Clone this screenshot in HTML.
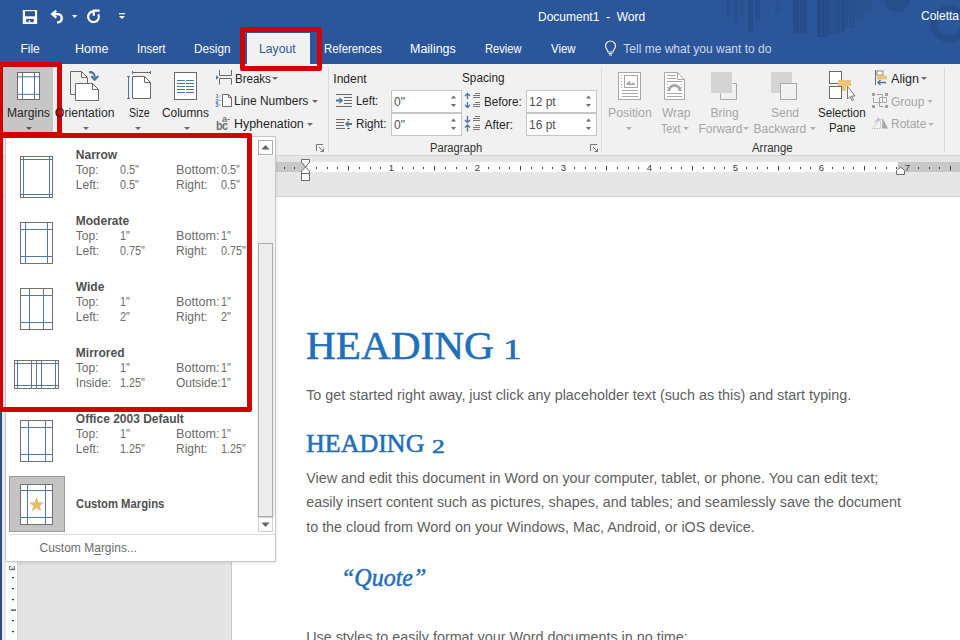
<!DOCTYPE html><html><head><meta charset="utf-8"><style>
html,body{margin:0;padding:0;width:960px;height:640px;overflow:hidden;background:#fff;}
.t{position:absolute;white-space:nowrap;}
.r{position:absolute;}
svg.r{overflow:visible;}
</style></head><body>
<div class="r" style="left:0px;top:0px;width:960px;height:64px;background:#2B579A"></div>
<div class="r" style="left:726.7px;top:0px;width:3.3px;height:16px;background:#284F8D;border-radius:0 0 3px 3px"></div>
<div class="r" style="left:734px;top:0px;width:4.3px;height:23px;background:#27508E;border-radius:0 0 3px 3px"></div>
<div class="r" style="left:740px;top:0px;width:4px;height:16px;background:#2A5290;border-radius:0 0 3px 3px"></div>
<div class="r" style="left:747.5px;top:0px;width:5px;height:32px;background:#264D8A;border-radius:0 0 3px 3px"></div>
<div class="r" style="left:755px;top:0px;width:5px;height:21px;background:#27508E;border-radius:0 0 3px 3px"></div>
<div class="r" style="left:775px;top:0px;width:6px;height:12px;background:#2A5391;border-radius:0 0 3px 3px"></div>
<div class="r" style="left:793.3px;top:0px;width:13.4px;height:32.5px;background:#264D8A;border-radius:0 0 3px 3px"></div>
<div class="r" style="left:816.7px;top:0px;width:11.6px;height:37px;background:#244B87;border-radius:0 0 3px 3px"></div>
<div class="r" style="left:828.3px;top:0px;width:8.4px;height:35px;background:#27508D;border-radius:0 0 3px 3px"></div>
<div class="r" style="left:836.7px;top:0px;width:8.3px;height:33px;background:#264E8B;border-radius:0 0 3px 3px"></div>
<div class="r" style="left:845px;top:0px;width:10px;height:28px;background:#28508D;border-radius:0 0 3px 3px"></div>
<div class="r" style="left:855px;top:0px;width:10px;height:20px;background:#29528F;border-radius:0 0 3px 3px"></div>
<div class="r" style="left:865px;top:0px;width:7px;height:12px;background:#2A5391;border-radius:0 0 3px 3px"></div>
<div class="r" style="left:799px;top:0px;width:1px;height:30px;background:#2A5492"></div>
<div class="r" style="left:802px;top:0px;width:1px;height:31px;background:#2A5492"></div>
<div class="r" style="left:821px;top:0px;width:1px;height:36px;background:#2A5492"></div>
<div class="r" style="left:825px;top:0px;width:1px;height:36px;background:#2A5492"></div>
<div class="r" style="left:832px;top:0px;width:1px;height:34px;background:#2A5492"></div>
<div class="r" style="left:840px;top:0px;width:1px;height:32px;background:#2A5492"></div>
<div class="r" style="left:848px;top:0px;width:1px;height:27px;background:#2A5492"></div>
<div class="r" style="left:852px;top:0px;width:1px;height:25px;background:#2A5492"></div>
<div class="r" style="left:859px;top:0px;width:1px;height:19px;background:#2A5492"></div>
<div class="r" style="left:868px;top:0px;width:1px;height:11px;background:#2A5492"></div>
<svg class="r" style="left:880px;top:0px;" width="80" height="64" viewBox="0 0 80 64"><circle cx="17" cy="-1" r="13" fill="#264E8B"/><circle cx="69" cy="24" r="15" fill="none" stroke="#264E8B" stroke-width="7"/></svg>
<svg class="r" style="left:22px;top:9px;" width="16" height="16" viewBox="0 0 16 16"><rect x="0.8" y="1" width="14.3" height="14" fill="#fff"/><rect x="3" y="2.2" width="10" height="5.1" fill="#2B579A"/><rect x="4.2" y="9.9" width="7.6" height="3.3" fill="#2B579A"/><rect x="6.6" y="11.4" width="1.6" height="1.8" fill="#fff"/></svg>
<svg class="r" style="left:46px;top:6px;" width="20" height="20" viewBox="0 0 20 20"><path d="M6 8.1H12.5A4.2 4.2 0 0 1 12.5 16.3H11" fill="none" stroke="#fff" stroke-width="2.3"/><path d="M10.3 4.7L6.2 8.1L10.3 11.6" fill="none" stroke="#fff" stroke-width="2.3"/></svg>
<svg class="r" style="left:72px;top:15px;" width="6" height="4" viewBox="0 0 6 4"><path d="M0 0h5.3l-2.65 3z" fill="#fff"/></svg>
<svg class="r" style="left:84px;top:6px;" width="20" height="20" viewBox="0 0 20 20"><path d="M9.5 5.3A5.4 5.4 0 1 0 14.3 8.2" fill="none" stroke="#fff" stroke-width="2.2"/><path d="M9.8 9.8V4.7H15.7" fill="none" stroke="#fff" stroke-width="2.2"/></svg>
<svg class="r" style="left:119px;top:13px;" width="7" height="8" viewBox="0 0 7 8"><rect x="0" y="0" width="6" height="1.3" fill="#fff"/><path d="M0 3h6l-3 3z" fill="#fff"/></svg>
<div class="t" style="left:538px;top:10.84px;font-size:12px;line-height:12px;color:#fff;font-weight:400;font-family:'Liberation Sans',sans-serif;font-style:normal;">Document1&nbsp;&nbsp;-&nbsp;&nbsp;Word</div>
<div class="t" style="left:921px;top:9.84px;font-size:12px;line-height:12px;color:#fff;font-weight:400;font-family:'Liberation Sans',sans-serif;font-style:normal;">Coletta</div>
<div class="t" style="left:20.4px;top:42.84px;font-size:12px;line-height:12px;color:#fff;font-weight:400;font-family:'Liberation Sans',sans-serif;font-style:normal;">File</div>
<div class="t" style="left:75px;top:42.84px;font-size:12px;line-height:12px;color:#fff;font-weight:400;font-family:'Liberation Sans',sans-serif;font-style:normal;transform:scaleX(1.045);transform-origin:0 0;">Home</div>
<div class="t" style="left:136.8px;top:42.84px;font-size:12px;line-height:12px;color:#fff;font-weight:400;font-family:'Liberation Sans',sans-serif;font-style:normal;transform:scaleX(0.95);transform-origin:0 0;">Insert</div>
<div class="t" style="left:194px;top:42.84px;font-size:12px;line-height:12px;color:#fff;font-weight:400;font-family:'Liberation Sans',sans-serif;font-style:normal;transform:scaleX(0.975);transform-origin:0 0;">Design</div>
<div class="r" style="left:247px;top:33px;width:63px;height:31px;background:#F1F1F1"></div>
<div class="t" style="left:259px;top:42.84px;font-size:12px;line-height:12px;color:#2F5A96;font-weight:400;font-family:'Liberation Sans',sans-serif;font-style:normal;transform:scaleX(1.02);transform-origin:0 0;">Layout</div>
<div class="t" style="left:324.2px;top:42.84px;font-size:12px;line-height:12px;color:#fff;font-weight:400;font-family:'Liberation Sans',sans-serif;font-style:normal;transform:scaleX(0.945);transform-origin:0 0;">References</div>
<div class="t" style="left:410.2px;top:42.84px;font-size:12px;line-height:12px;color:#fff;font-weight:400;font-family:'Liberation Sans',sans-serif;font-style:normal;transform:scaleX(1.04);transform-origin:0 0;">Mailings</div>
<div class="t" style="left:485.2px;top:42.84px;font-size:12px;line-height:12px;color:#fff;font-weight:400;font-family:'Liberation Sans',sans-serif;font-style:normal;transform:scaleX(0.925);transform-origin:0 0;">Review</div>
<div class="t" style="left:551px;top:42.84px;font-size:12px;line-height:12px;color:#fff;font-weight:400;font-family:'Liberation Sans',sans-serif;font-style:normal;transform:scaleX(0.95);transform-origin:0 0;">View</div>
<svg class="r" style="left:604px;top:40px;" width="13" height="16" viewBox="0 0 13 16"><path d="M6.5 1 A5 5 0 0 1 11.5 6 C11.5 8.5 9 10 9 12 H4 C4 10 1.5 8.5 1.5 6 A5 5 0 0 1 6.5 1z" fill="none" stroke="#E6ECF5" stroke-width="1.2"/><path d="M4.5 13.5h4M5 15h3" stroke="#E6ECF5" stroke-width="1"/></svg>
<div class="t" style="left:623.3px;top:42.84px;font-size:12px;line-height:12px;color:#CDD8EA;font-weight:400;font-family:'Liberation Sans',sans-serif;font-style:normal;">Tell me what you want to do</div>
<div class="r" style="left:0px;top:64px;width:960px;height:92px;background:#F1F1F1"></div>
<div class="r" style="left:0px;top:155px;width:960px;height:1px;background:#D5D5D5"></div>
<div class="r" style="left:328px;top:68px;width:1px;height:84px;background:#DADADA"></div>
<div class="r" style="left:601px;top:68px;width:1px;height:84px;background:#DADADA"></div>
<div class="r" style="left:944px;top:68px;width:1px;height:84px;background:#DADADA"></div>
<div class="r" style="left:3px;top:67px;width:50px;height:66px;background:#C6C6C6"></div>
<svg class="r" style="left:17px;top:72px;" width="23" height="29" viewBox="0 0 23 29"><rect x="0.5" y="0.5" width="22" height="27" fill="#fff" stroke="#6A6A6A"/><path d="M5.5 1V27M17.5 1V27M1 4.8H22M1 22.3H22" stroke="#4E74A0" stroke-width="1"/></svg>
<div class="t" style="left:6.5px;top:106.84px;font-size:12px;line-height:12px;color:#262626;font-weight:400;font-family:'Liberation Sans',sans-serif;font-style:normal;transform:scaleX(1.005);transform-origin:0 0;">Margins</div>
<svg class="r" style="left:26px;top:126.5px;" width="6" height="4" viewBox="0 0 6 4"><path d="M0 0h6l-3 3z" fill="#555"/></svg>
<svg class="r" style="left:64px;top:66px;" width="40" height="40" viewBox="0 0 40 40"><path d="M6.5 28.5V5.5H17.5L23.5 11.5V17" fill="none" stroke="#6A6A6A"/><path d="M17.5 5.5V11.5H23" fill="none" stroke="#6A6A6A"/><path d="M6.5 28.5H11" stroke="#6A6A6A"/><path d="M11.5 17.5H28.5L34.5 23.5V34.5H11.5Z" fill="#fff" stroke="#6A6A6A"/><path d="M28.5 17.5V23.5H34.5" fill="none" stroke="#6A6A6A"/><path d="M25 6.2 C28.5 5.8 31 7.5 30.8 12.5" fill="none" stroke="#4E74A0" stroke-width="2.1"/><path d="M27.3 10.3L30.7 13.8L34.3 10.1" fill="none" stroke="#4E74A0" stroke-width="2.1"/></svg>
<div class="r" style="left:74.5px;top:89px;width:0px;height:0px;"></div>
<div class="t" style="left:55.2px;top:106.84px;font-size:12px;line-height:12px;color:#262626;font-weight:400;font-family:'Liberation Sans',sans-serif;font-style:normal;transform:scaleX(1.012);transform-origin:0 0;">Orientation</div>
<svg class="r" style="left:82.5px;top:126.5px;" width="6" height="4" viewBox="0 0 6 4"><path d="M0 0h6l-3 3z" fill="#6A6A6A"/></svg>
<svg class="r" style="left:122px;top:66px;" width="40" height="40" viewBox="0 0 40 40"><path d="M6.5 10.5V32.5M5 10.5H8M5 32.5H8" stroke="#4E74A0"/><path d="M10.5 6.5H28.5M10.5 5V8M28.5 5V8" stroke="#6A6A6A"/><path d="M10.5 10.5H22.5L28.5 16.5V32.5H10.5Z" fill="#fff" stroke="#6A6A6A"/><path d="M22.5 10.5V16.5H28.5" fill="none" stroke="#6A6A6A"/></svg>
<div class="t" style="left:129px;top:106.84px;font-size:12px;line-height:12px;color:#262626;font-weight:400;font-family:'Liberation Sans',sans-serif;font-style:normal;transform:scaleX(0.88);transform-origin:0 0;">Size</div>
<svg class="r" style="left:135px;top:126.5px;" width="6" height="4" viewBox="0 0 6 4"><path d="M0 0h6l-3 3z" fill="#6A6A6A"/></svg>
<svg class="r" style="left:172px;top:70px;" width="28" height="32" viewBox="0 0 28 32"><rect x="2.5" y="2.5" width="22" height="27" fill="#fff" stroke="#6A6A6A"/><path d="M5 10.5H13M14 10.5H22" stroke="#4E74A0"/><path d="M5 13.5H13M14 13.5H22" stroke="#4E74A0"/><path d="M5 16.5H13M14 16.5H22" stroke="#4E74A0"/><path d="M5 19.5H13M14 19.5H22" stroke="#4E74A0"/><path d="M5 22.5H13M14 22.5H22" stroke="#4E74A0"/></svg>
<div class="t" style="left:162.4px;top:106.84px;font-size:12px;line-height:12px;color:#262626;font-weight:400;font-family:'Liberation Sans',sans-serif;font-style:normal;transform:scaleX(0.99);transform-origin:0 0;">Columns</div>
<svg class="r" style="left:183.5px;top:126.5px;" width="6" height="4" viewBox="0 0 6 4"><path d="M0 0h6l-3 3z" fill="#6A6A6A"/></svg>
<svg class="r" style="left:214px;top:68px;" width="20" height="20" viewBox="0 0 20 20"><path d="M5.5 2V7.5H17.5V2M5.5 16.5V10.5H17.5V16.5" fill="none" stroke="#6A6A6A"/><path d="M2 7.3L4.8 9.5L2 11.7Z" fill="#4E74A0"/></svg>
<div class="t" style="left:235px;top:72.64px;font-size:12px;line-height:12px;color:#262626;font-weight:400;font-family:'Liberation Sans',sans-serif;font-style:normal;transform:scaleX(0.96);transform-origin:0 0;">Breaks</div>
<svg class="r" style="left:271.7px;top:76.5px;" width="6" height="4" viewBox="0 0 6 4"><path d="M0 0h6l-3 3z" fill="#6A6A6A"/></svg>
<svg class="r" style="left:214px;top:92px;" width="20" height="18" viewBox="0 0 20 18"><path d="M8.5 2.5H14.5L17.5 5.5V14.5H8.5Z" fill="#fff" stroke="#6A6A6A"/><path d="M14.5 2.5V5.5H17.5" fill="none" stroke="#6A6A6A"/><text x="1.6" y="6.2" font-size="5.5" font-weight="700" fill="#4E74A0" font-family="Liberation Sans">1</text><text x="1.6" y="10.7" font-size="5.5" font-weight="700" fill="#4E74A0" font-family="Liberation Sans">2</text><text x="1.6" y="15.2" font-size="5.5" font-weight="700" fill="#4E74A0" font-family="Liberation Sans">3</text><path d="M6 3.5v1M6 8v1M6 12.5v1" stroke="#4E74A0"/></svg>
<div class="t" style="left:234.3px;top:95.44px;font-size:12px;line-height:12px;color:#262626;font-weight:400;font-family:'Liberation Sans',sans-serif;font-style:normal;transform:scaleX(0.995);transform-origin:0 0;">Line Numbers</div>
<svg class="r" style="left:311.7px;top:99.5px;" width="6" height="4" viewBox="0 0 6 4"><path d="M0 0h6l-3 3z" fill="#6A6A6A"/></svg>
<div class="t" style="left:215.5px;top:119.54px;font-size:12px;line-height:12px;color:#707070;font-weight:700;font-family:'Liberation Sans',sans-serif;font-style:normal;transform:scaleX(0.9);transform-origin:0 0;letter-spacing:-0.8px">bc</div>
<div class="t" style="left:222px;top:114.26px;font-size:9.5px;line-height:9.5px;color:#707070;font-weight:700;font-family:'Liberation Sans',sans-serif;font-style:normal;transform:scaleX(0.95);transform-origin:0 0;">a-</div>
<div class="t" style="left:234.3px;top:118.44px;font-size:12px;line-height:12px;color:#262626;font-weight:400;font-family:'Liberation Sans',sans-serif;font-style:normal;transform:scaleX(1.035);transform-origin:0 0;">Hyphenation</div>
<svg class="r" style="left:306.5px;top:122.5px;" width="6" height="4" viewBox="0 0 6 4"><path d="M0 0h6l-3 3z" fill="#6A6A6A"/></svg>
<svg class="r" style="left:316px;top:144px;" width="9" height="9" viewBox="0 0 9 9"><path d="M0.5 7V0.5H7" fill="none" stroke="#777"/><path d="M3 3L7.5 7.5M4.5 7.5H7.5V4.5" fill="none" stroke="#777"/></svg>
<div class="t" style="left:333.3px;top:72.64px;font-size:12px;line-height:12px;color:#262626;font-weight:400;font-family:'Liberation Sans',sans-serif;font-style:normal;">Indent</div>
<div class="t" style="left:461.8px;top:72.44px;font-size:12px;line-height:12px;color:#262626;font-weight:400;font-family:'Liberation Sans',sans-serif;font-style:normal;transform:scaleX(0.98);transform-origin:0 0;">Spacing</div>
<svg class="r" style="left:334px;top:92px;" width="20" height="16" viewBox="0 0 20 16"><path d="M2 2.5H18M10 5.5H18M10 8.5H18M10 11.5H18M2 14.5H18" stroke="#6A6A6A" stroke-width="1.1"/><path d="M2 7.5H5.5V5L9 8.5L5.5 12V9.5H2Z" fill="#4E74A0"/></svg>
<div class="t" style="left:355.8px;top:95.14px;font-size:12px;line-height:12px;color:#262626;font-weight:400;font-family:'Liberation Sans',sans-serif;font-style:normal;transform:scaleX(0.955);transform-origin:0 0;">Left:</div>
<svg class="r" style="left:334px;top:116px;" width="20" height="16" viewBox="0 0 20 16"><path d="M2 3.5H11M13 3.5H16M2 6.5H10M2 9.5H10M2 12.5H11M13 12.5H16" stroke="#6A6A6A" stroke-width="1.1"/><path d="M18 7H14.5V4.5L11 8L14.5 11.5V9H18Z" fill="#4E74A0"/></svg>
<div class="t" style="left:355.8px;top:118.34px;font-size:12px;line-height:12px;color:#262626;font-weight:400;font-family:'Liberation Sans',sans-serif;font-style:normal;transform:scaleX(0.975);transform-origin:0 0;">Right:</div>
<div class="r" style="left:391px;top:90px;width:71px;height:23px;background:#fff;box-shadow:inset 0 0 0 1px #C6C6C6"></div>
<div class="t" style="left:394px;top:95.84px;font-size:12px;line-height:12px;color:#505050;font-weight:400;font-family:'Liberation Sans',sans-serif;font-style:normal;">0"</div>
<svg class="r" style="left:450px;top:94px;" width="8" height="14" viewBox="0 0 8 14"><path d="M1 4.5L3.5 1.5L6 4.5Z" fill="#6A6A6A"/><path d="M1 10L3.5 13L6 10Z" fill="#6A6A6A"/></svg>
<div class="r" style="left:391px;top:113px;width:71px;height:23px;background:#fff;box-shadow:inset 0 0 0 1px #C6C6C6"></div>
<div class="t" style="left:394px;top:118.84px;font-size:12px;line-height:12px;color:#505050;font-weight:400;font-family:'Liberation Sans',sans-serif;font-style:normal;">0"</div>
<svg class="r" style="left:450px;top:117px;" width="8" height="14" viewBox="0 0 8 14"><path d="M1 4.5L3.5 1.5L6 4.5Z" fill="#6A6A6A"/><path d="M1 10L3.5 13L6 10Z" fill="#6A6A6A"/></svg>
<svg class="r" style="left:462px;top:91px;" width="20" height="18" viewBox="0 0 20 18"><path d="M5.5 2.5V8M3 5L5.5 2.5L8 5M5.5 11V16.5M3 14L5.5 16.5L8 14" fill="none" stroke="#4E74A0" stroke-width="1.3"/><path d="M13 2.5H18M11 4.5H18M11 6.5H18M13 11.5H18M11 13.5H18M11 15.5H18" stroke="#777" stroke-width="1"/></svg>
<div class="t" style="left:484px;top:95.84px;font-size:12px;line-height:12px;color:#262626;font-weight:400;font-family:'Liberation Sans',sans-serif;font-style:normal;transform:scaleX(0.975);transform-origin:0 0;">Before:</div>
<svg class="r" style="left:462px;top:115px;" width="20" height="18" viewBox="0 0 20 18"><path d="M5.5 1V7.5M3 5L5.5 7.5L8 5M5.5 10V16.5M3 12.5L5.5 10L8 12.5" fill="none" stroke="#4E74A0" stroke-width="1.3"/><path d="M13 1.5H18M11 3.5H18M11 5.5H18M13 10.5H18M11 12.5H18M11 14.5H18" stroke="#777" stroke-width="1"/></svg>
<div class="t" style="left:484.4px;top:118.84px;font-size:12px;line-height:12px;color:#262626;font-weight:400;font-family:'Liberation Sans',sans-serif;font-style:normal;">After:</div>
<div class="r" style="left:526px;top:90px;width:71px;height:23px;background:#fff;box-shadow:inset 0 0 0 1px #C6C6C6"></div>
<div class="t" style="left:529px;top:95.84px;font-size:12px;line-height:12px;color:#505050;font-weight:400;font-family:'Liberation Sans',sans-serif;font-style:normal;">12 pt</div>
<svg class="r" style="left:585px;top:94px;" width="8" height="14" viewBox="0 0 8 14"><path d="M1 4.5L3.5 1.5L6 4.5Z" fill="#6A6A6A"/><path d="M1 10L3.5 13L6 10Z" fill="#6A6A6A"/></svg>
<div class="r" style="left:526px;top:113px;width:71px;height:23px;background:#fff;box-shadow:inset 0 0 0 1px #C6C6C6"></div>
<div class="t" style="left:529px;top:118.84px;font-size:12px;line-height:12px;color:#505050;font-weight:400;font-family:'Liberation Sans',sans-serif;font-style:normal;">16 pt</div>
<svg class="r" style="left:585px;top:117px;" width="8" height="14" viewBox="0 0 8 14"><path d="M1 4.5L3.5 1.5L6 4.5Z" fill="#6A6A6A"/><path d="M1 10L3.5 13L6 10Z" fill="#6A6A6A"/></svg>
<div class="t" style="left:430.2px;top:141.64px;font-size:12px;line-height:12px;color:#333;font-weight:400;font-family:'Liberation Sans',sans-serif;font-style:normal;transform:scaleX(0.93);transform-origin:0 0;">Paragraph</div>
<svg class="r" style="left:590px;top:144px;" width="9" height="9" viewBox="0 0 9 9"><path d="M0.5 7V0.5H7" fill="none" stroke="#777"/><path d="M3 3L7.5 7.5M4.5 7.5H7.5V4.5" fill="none" stroke="#777"/></svg>
<svg class="r" style="left:617px;top:71px;" width="26" height="30" viewBox="0 0 26 30"><rect x="1.5" y="1.5" width="22" height="27" fill="#fff" stroke="#A8A8A8"/><rect x="7.5" y="4.5" width="13" height="12" fill="#fff" stroke="#A8A8A8"/><path d="M9 14L12 9.5L14.5 13L16 11L18.5 14Z" fill="#A8A8A8"/><path d="M5 19.5H21M5 22.5H21M5 25.5H21M4 4.5h1M4 7.5h1M4 10.5h1M4 13.5h1M4 16.5h1" stroke="#A8A8A8"/></svg>
<div class="t" style="left:608px;top:106.84px;font-size:12px;line-height:12px;color:#A6A6A6;font-weight:400;font-family:'Liberation Sans',sans-serif;font-style:normal;transform:scaleX(1.025);transform-origin:0 0;">Position</div>
<svg class="r" style="left:626px;top:127.19999999999999px;" width="6" height="4" viewBox="0 0 6 4"><path d="M0 0h6l-3 3z" fill="#B0B0B0"/></svg>
<svg class="r" style="left:663px;top:71px;" width="24" height="30" viewBox="0 0 24 30"><path d="M1.5 1.5H14.5L21.5 8.5V28.5H1.5Z" fill="#fff" stroke="#A8A8A8"/><path d="M14.5 1.5V8.5H21.5" fill="none" stroke="#A8A8A8"/><path d="M4 4.5H13M4 7.5H13M4 10.5H19M4 22.5H19M4 25.5H19M4 13.5h1M4 16.5h1M4 19.5h1M18 13.5h1M18 16.5h1M18 19.5h1" stroke="#A8A8A8"/><path d="M6 20A5.5 5.5 0 0 1 17 20" fill="none" stroke="#A8A8A8" stroke-width="3"/></svg>
<div class="t" style="left:661.9px;top:106.84px;font-size:12px;line-height:12px;color:#A6A6A6;font-weight:400;font-family:'Liberation Sans',sans-serif;font-style:normal;">Wrap</div>
<div class="t" style="left:661px;top:122.84px;font-size:12px;line-height:12px;color:#A6A6A6;font-weight:400;font-family:'Liberation Sans',sans-serif;font-style:normal;transform:scaleX(0.89);transform-origin:0 0;">Text</div>
<svg class="r" style="left:683.3px;top:127.19999999999999px;" width="6" height="4" viewBox="0 0 6 4"><path d="M0 0h6l-3 3z" fill="#B0B0B0"/></svg>
<svg class="r" style="left:710px;top:71px;" width="28" height="30" viewBox="0 0 28 30"><rect x="1" y="1" width="21" height="21" fill="#D4D4D4"/><path d="M22.5 12.5H26.5V28.5H10.5V22.5" fill="none" stroke="#A8A8A8"/></svg>
<div class="t" style="left:710.6px;top:106.84px;font-size:12px;line-height:12px;color:#A6A6A6;font-weight:400;font-family:'Liberation Sans',sans-serif;font-style:normal;">Bring</div>
<div class="t" style="left:698.4px;top:122.84px;font-size:12px;line-height:12px;color:#A6A6A6;font-weight:400;font-family:'Liberation Sans',sans-serif;font-style:normal;">Forward</div>
<svg class="r" style="left:743px;top:127.19999999999999px;" width="6" height="4" viewBox="0 0 6 4"><path d="M0 0h6l-3 3z" fill="#B0B0B0"/></svg>
<svg class="r" style="left:770px;top:71px;" width="28" height="30" viewBox="0 0 28 30"><rect x="1" y="1" width="21" height="21" fill="#D4D4D4"/><rect x="10.5" y="12.5" width="16" height="16" fill="#F1F1F1" stroke="#A8A8A8"/></svg>
<div class="t" style="left:771px;top:106.84px;font-size:12px;line-height:12px;color:#A6A6A6;font-weight:400;font-family:'Liberation Sans',sans-serif;font-style:normal;">Send</div>
<div class="t" style="left:753.5px;top:122.84px;font-size:12px;line-height:12px;color:#A6A6A6;font-weight:400;font-family:'Liberation Sans',sans-serif;font-style:normal;">Backward</div>
<svg class="r" style="left:809.5px;top:127.19999999999999px;" width="6" height="4" viewBox="0 0 6 4"><path d="M0 0h6l-3 3z" fill="#B0B0B0"/></svg>
<div class="t" style="left:751.8px;top:141.64px;font-size:12px;line-height:12px;color:#333;font-weight:400;font-family:'Liberation Sans',sans-serif;font-style:normal;transform:scaleX(0.95);transform-origin:0 0;">Arrange</div>
<svg class="r" style="left:826px;top:69px;" width="32" height="34" viewBox="0 0 32 34"><rect x="3.5" y="2.5" width="12" height="12" fill="#fff" stroke="#6A6A6A"/><rect x="3.5" y="17.5" width="12" height="12" fill="#fff" stroke="#6A6A6A"/><path d="M12 11H25V17H20V22H16V17H12Z" fill="#EEC37A"/><path d="M21.5 17.5V30L24 27.5L26 31.5L27.5 30.8L25.5 27H29Z" fill="#fff" stroke="#6A6A6A" stroke-width="0.9"/></svg>
<div class="t" style="left:818px;top:106.84px;font-size:12px;line-height:12px;color:#262626;font-weight:400;font-family:'Liberation Sans',sans-serif;font-style:normal;transform:scaleX(0.967);transform-origin:0 0;">Selection</div>
<div class="t" style="left:829.4px;top:122.14px;font-size:12px;line-height:12px;color:#262626;font-weight:400;font-family:'Liberation Sans',sans-serif;font-style:normal;transform:scaleX(0.95);transform-origin:0 0;">Pane</div>
<svg class="r" style="left:872px;top:69px;" width="18" height="18" viewBox="0 0 18 18"><path d="M3.5 1V16" stroke="#6A6A6A"/><rect x="5" y="2" width="6" height="4" fill="#fff" stroke="#6A6A6A" stroke-width="0.8"/><rect x="5" y="6.5" width="10" height="4" fill="#EEC37A"/><path d="M14 13.5H6M8.5 11L6 13.5L8.5 16" fill="none" stroke="#4E74A0" stroke-width="1.3"/></svg>
<div class="t" style="left:891px;top:72.64px;font-size:12px;line-height:12px;color:#262626;font-weight:400;font-family:'Liberation Sans',sans-serif;font-style:normal;transform:scaleX(1.054);transform-origin:0 0;">Align</div>
<svg class="r" style="left:921.4px;top:76.5px;" width="6" height="4" viewBox="0 0 6 4"><path d="M0 0h6l-3 3z" fill="#6A6A6A"/></svg>
<svg class="r" style="left:868px;top:90px;" width="24" height="20" viewBox="0 0 24 20"><rect x="4" y="3" width="3" height="3" fill="#A0A0A0"/><rect x="17" y="3" width="3" height="3" fill="#A0A0A0"/><rect x="4" y="15" width="3" height="3" fill="#A0A0A0"/><rect x="17" y="15" width="3" height="3" fill="#A0A0A0"/><path d="M8.5 4.5H14.5V12.5M5.5 7.5V12.5H18.5V7.5H11.5V16.5H15.5" fill="none" stroke="#A8A8A8"/></svg>
<div class="t" style="left:891px;top:95.84px;font-size:12px;line-height:12px;color:#A6A6A6;font-weight:400;font-family:'Liberation Sans',sans-serif;font-style:normal;">Group</div>
<svg class="r" style="left:927px;top:99.5px;" width="6" height="4" viewBox="0 0 6 4"><path d="M0 0h6l-3 3z" fill="#B8B8B8"/></svg>
<svg class="r" style="left:868px;top:114px;" width="24" height="18" viewBox="0 0 24 18"><path d="M14.2 3.5L20 14.5H14.2Z" fill="#A8A8A8"/><path d="M12.5 14.5H4.5L12.5 5V14" fill="none" stroke="#B8B8B8" stroke-dasharray="1.5 1"/><path d="M7 8.5C7.5 6.5 8.5 5.5 10.5 5.5" fill="none" stroke="#A8A8A8"/><path d="M9.5 3.5L11.5 5.5L9.5 7.5" fill="none" stroke="#A8A8A8"/></svg>
<div class="t" style="left:891px;top:118.14px;font-size:12px;line-height:12px;color:#A6A6A6;font-weight:400;font-family:'Liberation Sans',sans-serif;font-style:normal;">Rotate</div>
<svg class="r" style="left:928.3px;top:122.5px;" width="6" height="4" viewBox="0 0 6 4"><path d="M0 0h6l-3 3z" fill="#B8B8B8"/></svg>
<div class="r" style="left:0px;top:156px;width:960px;height:40px;background:#E6E6E6"></div>
<div class="r" style="left:0px;top:196px;width:960px;height:1px;background:#D4D4D4"></div>
<div class="r" style="left:232px;top:162px;width:74px;height:10px;background:#C8C8C8"></div>
<div class="r" style="left:306px;top:162px;width:592px;height:10px;background:#FFFFFF"></div>
<div class="r" style="left:898px;top:162px;width:62px;height:10px;background:#C8C8C8"></div>
<svg class="r" style="left:0px;top:0px;pointer-events:none" width="960" height="640" viewBox="0 0 960 640"><rect x="241" y="167" width="1" height="2" fill="#444"/><rect x="251" y="167" width="1" height="2" fill="#444"/><rect x="262" y="166" width="1" height="4.5" fill="#444"/><rect x="273" y="167" width="1" height="2" fill="#444"/><rect x="284" y="167" width="1" height="2" fill="#444"/><rect x="294" y="167" width="1" height="2" fill="#444"/><rect x="316" y="167" width="1" height="2" fill="#444"/><rect x="327" y="167" width="1" height="2" fill="#444"/><rect x="337" y="167" width="1" height="2" fill="#444"/><rect x="348" y="166" width="1" height="4.5" fill="#444"/><rect x="359" y="167" width="1" height="2" fill="#444"/><rect x="370" y="167" width="1" height="2" fill="#444"/><rect x="380" y="167" width="1" height="2" fill="#444"/><text x="391.5" y="171" font-size="9.5" text-anchor="middle" fill="#3A3A3A" font-family="Liberation Sans">1</text><rect x="402" y="167" width="1" height="2" fill="#444"/><rect x="413" y="167" width="1" height="2" fill="#444"/><rect x="423" y="167" width="1" height="2" fill="#444"/><rect x="434" y="166" width="1" height="4.5" fill="#444"/><rect x="445" y="167" width="1" height="2" fill="#444"/><rect x="456" y="167" width="1" height="2" fill="#444"/><rect x="466" y="167" width="1" height="2" fill="#444"/><text x="477.5" y="171" font-size="9.5" text-anchor="middle" fill="#3A3A3A" font-family="Liberation Sans">2</text><rect x="488" y="167" width="1" height="2" fill="#444"/><rect x="499" y="167" width="1" height="2" fill="#444"/><rect x="509" y="167" width="1" height="2" fill="#444"/><rect x="520" y="166" width="1" height="4.5" fill="#444"/><rect x="531" y="167" width="1" height="2" fill="#444"/><rect x="542" y="167" width="1" height="2" fill="#444"/><rect x="552" y="167" width="1" height="2" fill="#444"/><text x="563.5" y="171" font-size="9.5" text-anchor="middle" fill="#3A3A3A" font-family="Liberation Sans">3</text><rect x="574" y="167" width="1" height="2" fill="#444"/><rect x="585" y="167" width="1" height="2" fill="#444"/><rect x="595" y="167" width="1" height="2" fill="#444"/><rect x="606" y="166" width="1" height="4.5" fill="#444"/><rect x="617" y="167" width="1" height="2" fill="#444"/><rect x="628" y="167" width="1" height="2" fill="#444"/><rect x="638" y="167" width="1" height="2" fill="#444"/><text x="649.5" y="171" font-size="9.5" text-anchor="middle" fill="#3A3A3A" font-family="Liberation Sans">4</text><rect x="660" y="167" width="1" height="2" fill="#444"/><rect x="671" y="167" width="1" height="2" fill="#444"/><rect x="681" y="167" width="1" height="2" fill="#444"/><rect x="692" y="166" width="1" height="4.5" fill="#444"/><rect x="703" y="167" width="1" height="2" fill="#444"/><rect x="714" y="167" width="1" height="2" fill="#444"/><rect x="724" y="167" width="1" height="2" fill="#444"/><text x="735.5" y="171" font-size="9.5" text-anchor="middle" fill="#3A3A3A" font-family="Liberation Sans">5</text><rect x="746" y="167" width="1" height="2" fill="#444"/><rect x="757" y="167" width="1" height="2" fill="#444"/><rect x="767" y="167" width="1" height="2" fill="#444"/><rect x="778" y="166" width="1" height="4.5" fill="#444"/><rect x="789" y="167" width="1" height="2" fill="#444"/><rect x="800" y="167" width="1" height="2" fill="#444"/><rect x="810" y="167" width="1" height="2" fill="#444"/><text x="821.5" y="171" font-size="9.5" text-anchor="middle" fill="#3A3A3A" font-family="Liberation Sans">6</text><rect x="832" y="167" width="1" height="2" fill="#444"/><rect x="843" y="167" width="1" height="2" fill="#444"/><rect x="853" y="167" width="1" height="2" fill="#444"/><rect x="864" y="166" width="1" height="4.5" fill="#444"/><rect x="875" y="167" width="1" height="2" fill="#444"/><rect x="886" y="167" width="1" height="2" fill="#444"/><rect x="896" y="167" width="1" height="2" fill="#444"/><text x="907.5" y="171" font-size="9.5" text-anchor="middle" fill="#3A3A3A" font-family="Liberation Sans">7</text><rect x="918" y="167" width="1" height="2" fill="#444"/><rect x="929" y="167" width="1" height="2" fill="#444"/><rect x="939" y="167" width="1" height="2" fill="#444"/><rect x="950" y="166" width="1" height="4.5" fill="#444"/></svg>
<svg class="r" style="left:300px;top:158px;" width="12" height="24" viewBox="0 0 12 24"><path d="M1.5 1.5H9.5V4L5.5 9L9.5 13V15.5H1.5V13L5.5 9L1.5 4Z" fill="#fff" stroke="#6A6A6A"/><rect x="1.5" y="15.5" width="8" height="7" fill="#fff" stroke="#6A6A6A"/></svg>
<svg class="r" style="left:895px;top:166px;" width="12" height="10" viewBox="0 0 12 10"><path d="M1.5 8.5V4.5L5.5 1L9.5 4.5V8.5Z" fill="#fff" stroke="#6A6A6A"/></svg>
<div class="r" style="left:0px;top:197px;width:1.5px;height:443px;background:#2B4F86"></div>
<div class="r" style="left:1.5px;top:197px;width:4px;height:443px;background:#EDE8E8"></div>
<div class="r" style="left:5.5px;top:197px;width:12px;height:443px;background:#FFFFFF"></div>
<div class="r" style="left:17px;top:197px;width:215px;height:443px;background:#E4E4E4"></div>
<div class="r" style="left:17px;top:197px;width:1px;height:443px;background:#D8D8D8"></div>
<div class="r" style="left:20px;top:197px;width:1px;height:443px;background:#DDDDDD"></div>
<div class="r" style="left:226px;top:197px;width:1px;height:443px;background:#EAEAEA"></div>
<div class="r" style="left:231px;top:197px;width:1px;height:443px;background:#C9C9C9"></div>
<svg class="r" style="left:0px;top:560px;" width="20" height="80" viewBox="0 0 20 80"><text x="0" y="0" font-size="9.5" fill="#333" font-family="Liberation Sans" transform="translate(9.3,5.5) rotate(90)">3</text><rect x="12" y="17" width="2" height="1.2" fill="#333"/><rect x="12" y="28" width="2" height="1.2" fill="#333"/><rect x="12" y="39" width="2" height="1.2" fill="#333"/><rect x="11" y="49.5" width="5" height="1.2" fill="#333"/><rect x="12" y="60" width="2" height="1.2" fill="#333"/><rect x="12" y="71" width="2" height="1.2" fill="#333"/></svg>
<div class="t" style="left:305.8px;top:326.10px;font-size:40px;line-height:40px;color:#1F6FBA;font-weight:400;font-family:'Liberation Serif',serif;font-style:normal;transform:scaleX(1.03);transform-origin:0 0;-webkit-text-stroke:0.6px #1F6FBA">HEADING</div>
<div class="t" style="left:502.5px;top:335.09px;font-size:29.5px;line-height:29.5px;color:#1F6FBA;font-weight:400;font-family:'Liberation Serif',serif;font-style:normal;transform:scaleX(1.25);transform-origin:0 0;-webkit-text-stroke:0.6px #1F6FBA">1</div>
<div class="t" style="left:306.2px;top:388.45px;font-size:14.35px;line-height:14.35px;color:#606060;font-weight:400;font-family:'Liberation Sans',sans-serif;font-style:normal;">To get started right away, just click any placeholder text (such as this) and start typing.</div>
<div class="t" style="left:306.4px;top:431.46px;font-size:25px;line-height:25px;color:#1F6FBA;font-weight:400;font-family:'Liberation Serif',serif;font-style:normal;transform:scaleX(1.04);transform-origin:0 0;-webkit-text-stroke:0.55px #1F6FBA">HEADING</div>
<div class="t" style="left:432.3px;top:436.89px;font-size:19px;line-height:19px;color:#1F6FBA;font-weight:400;font-family:'Liberation Serif',serif;font-style:normal;transform:scaleX(1.35);transform-origin:0 0;-webkit-text-stroke:0.55px #1F6FBA">2</div>
<div class="t" style="left:306.2px;top:470.95px;font-size:14.35px;line-height:14.35px;color:#606060;font-weight:400;font-family:'Liberation Sans',sans-serif;font-style:normal;">View and edit this document in Word on your computer, tablet, or phone. You can edit text;</div>
<div class="t" style="left:306.2px;top:495.35px;font-size:14.35px;line-height:14.35px;color:#606060;font-weight:400;font-family:'Liberation Sans',sans-serif;font-style:normal;">easily insert content such as pictures, shapes, and tables; and seamlessly save the document</div>
<div class="t" style="left:306.2px;top:519.75px;font-size:14.35px;line-height:14.35px;color:#606060;font-weight:400;font-family:'Liberation Sans',sans-serif;font-style:normal;">to the cloud from Word on your Windows, Mac, Android, or iOS device.</div>
<div class="t" style="left:341px;top:565.68px;font-size:24.5px;line-height:24.5px;color:#1F6FBA;font-weight:400;font-family:'Liberation Serif',serif;font-style:italic;transform:scaleX(0.98);transform-origin:0 0;-webkit-text-stroke:0.5px #1F6FBA">&#8220;Quote&#8221;</div>
<div class="t" style="left:306.2px;top:629.85px;font-size:14.35px;line-height:14.35px;color:#606060;font-weight:400;font-family:'Liberation Sans',sans-serif;font-style:normal;">Use styles to easily format your Word documents in no time:</div>
<div class="r" style="left:6px;top:137px;width:269px;height:424px;background:#fff;box-shadow:0 0 0 1px #C8C8C8, 1px 2px 3px rgba(0,0,0,0.12)"></div>
<div class="r" style="left:257px;top:156px;width:18px;height:361px;background:#F0F0F0"></div>
<div class="r" style="left:258px;top:140px;width:15px;height:15px;background:#fff;box-shadow:inset 0 0 0 1px #ABABAB"></div>
<svg class="r" style="left:261px;top:144px;" width="9" height="6" viewBox="0 0 9 6"><path d="M0.5 5.5L4.5 1L8.5 5.5Z" fill="#606060"/></svg>
<div class="r" style="left:258px;top:243px;width:15px;height:274px;background:#EDEDED;box-shadow:inset 0 0 0 1px #ABABAB"></div>
<div class="r" style="left:258px;top:517px;width:15px;height:15px;background:#fff;box-shadow:inset 0 0 0 1px #D0D0D0"></div>
<svg class="r" style="left:261px;top:522px;" width="9" height="6" viewBox="0 0 9 6"><path d="M0.5 0.5L4.5 5L8.5 0.5Z" fill="#606060"/></svg>
<div class="r" style="left:9px;top:534px;width:266px;height:1px;background:#DCDCDC"></div>
<svg class="r" style="left:20px;top:156px;" width="33" height="42" viewBox="0 0 33 42"><rect x="0.5" y="0.5" width="32" height="41" fill="#fff" stroke="#717171"/><path d="M3.5 1V41M29.5 1V41M1 3.5H32M1 38.5H32" stroke="#4F78A8"/></svg>
<div class="t" style="left:75.8px;top:148.54px;font-size:12px;line-height:12px;color:#505050;font-weight:700;font-family:'Liberation Sans',sans-serif;font-style:normal;">Narrow</div>
<div class="t" style="left:75.8px;top:163.54px;font-size:12px;line-height:12px;color:#6B6B6B;font-weight:400;font-family:'Liberation Sans',sans-serif;font-style:normal;">Top:</div>
<div class="t" style="left:120.3px;top:163.54px;font-size:12px;line-height:12px;color:#6B6B6B;font-weight:400;font-family:'Liberation Sans',sans-serif;font-style:normal;transform:scaleX(0.9);transform-origin:0 0;">0.5"</div>
<div class="t" style="left:176px;top:163.54px;font-size:12px;line-height:12px;color:#6B6B6B;font-weight:400;font-family:'Liberation Sans',sans-serif;font-style:normal;transform:scaleX(1.05);transform-origin:0 0;">Bottom:</div>
<div class="t" style="left:221.2px;top:163.54px;font-size:12px;line-height:12px;color:#6B6B6B;font-weight:400;font-family:'Liberation Sans',sans-serif;font-style:normal;transform:scaleX(0.9);transform-origin:0 0;">0.5"</div>
<div class="t" style="left:75.8px;top:178.54px;font-size:12px;line-height:12px;color:#6B6B6B;font-weight:400;font-family:'Liberation Sans',sans-serif;font-style:normal;">Left:</div>
<div class="t" style="left:120.3px;top:178.54px;font-size:12px;line-height:12px;color:#6B6B6B;font-weight:400;font-family:'Liberation Sans',sans-serif;font-style:normal;transform:scaleX(0.9);transform-origin:0 0;">0.5"</div>
<div class="t" style="left:176px;top:178.54px;font-size:12px;line-height:12px;color:#6B6B6B;font-weight:400;font-family:'Liberation Sans',sans-serif;font-style:normal;transform:scaleX(1.0);transform-origin:0 0;">Right:</div>
<div class="t" style="left:221.2px;top:178.54px;font-size:12px;line-height:12px;color:#6B6B6B;font-weight:400;font-family:'Liberation Sans',sans-serif;font-style:normal;transform:scaleX(0.9);transform-origin:0 0;">0.5"</div>
<svg class="r" style="left:20px;top:222px;" width="33" height="42" viewBox="0 0 33 42"><rect x="0.5" y="0.5" width="32" height="41" fill="#fff" stroke="#717171"/><path d="M5.5 1V41M27.5 1V41M1 7.5H32M1 34.5H32" stroke="#4F78A8"/></svg>
<div class="t" style="left:75.8px;top:214.54px;font-size:12px;line-height:12px;color:#505050;font-weight:700;font-family:'Liberation Sans',sans-serif;font-style:normal;">Moderate</div>
<div class="t" style="left:75.8px;top:229.54px;font-size:12px;line-height:12px;color:#6B6B6B;font-weight:400;font-family:'Liberation Sans',sans-serif;font-style:normal;">Top:</div>
<div class="t" style="left:120.3px;top:229.54px;font-size:12px;line-height:12px;color:#6B6B6B;font-weight:400;font-family:'Liberation Sans',sans-serif;font-style:normal;transform:scaleX(0.9);transform-origin:0 0;">1"</div>
<div class="t" style="left:176px;top:229.54px;font-size:12px;line-height:12px;color:#6B6B6B;font-weight:400;font-family:'Liberation Sans',sans-serif;font-style:normal;transform:scaleX(1.05);transform-origin:0 0;">Bottom:</div>
<div class="t" style="left:221.2px;top:229.54px;font-size:12px;line-height:12px;color:#6B6B6B;font-weight:400;font-family:'Liberation Sans',sans-serif;font-style:normal;transform:scaleX(0.9);transform-origin:0 0;">1"</div>
<div class="t" style="left:75.8px;top:244.54px;font-size:12px;line-height:12px;color:#6B6B6B;font-weight:400;font-family:'Liberation Sans',sans-serif;font-style:normal;">Left:</div>
<div class="t" style="left:120.3px;top:244.54px;font-size:12px;line-height:12px;color:#6B6B6B;font-weight:400;font-family:'Liberation Sans',sans-serif;font-style:normal;transform:scaleX(0.9);transform-origin:0 0;">0.75"</div>
<div class="t" style="left:176px;top:244.54px;font-size:12px;line-height:12px;color:#6B6B6B;font-weight:400;font-family:'Liberation Sans',sans-serif;font-style:normal;transform:scaleX(1.0);transform-origin:0 0;">Right:</div>
<div class="t" style="left:221.2px;top:244.54px;font-size:12px;line-height:12px;color:#6B6B6B;font-weight:400;font-family:'Liberation Sans',sans-serif;font-style:normal;transform:scaleX(0.9);transform-origin:0 0;">0.75"</div>
<svg class="r" style="left:20px;top:288px;" width="33" height="42" viewBox="0 0 33 42"><rect x="0.5" y="0.5" width="32" height="41" fill="#fff" stroke="#717171"/><path d="M9.5 1V41M23.5 1V41M1 7.5H32M1 34.5H32" stroke="#4F78A8"/></svg>
<div class="t" style="left:75.8px;top:280.54px;font-size:12px;line-height:12px;color:#505050;font-weight:700;font-family:'Liberation Sans',sans-serif;font-style:normal;">Wide</div>
<div class="t" style="left:75.8px;top:295.54px;font-size:12px;line-height:12px;color:#6B6B6B;font-weight:400;font-family:'Liberation Sans',sans-serif;font-style:normal;">Top:</div>
<div class="t" style="left:120.3px;top:295.54px;font-size:12px;line-height:12px;color:#6B6B6B;font-weight:400;font-family:'Liberation Sans',sans-serif;font-style:normal;transform:scaleX(0.9);transform-origin:0 0;">1"</div>
<div class="t" style="left:176px;top:295.54px;font-size:12px;line-height:12px;color:#6B6B6B;font-weight:400;font-family:'Liberation Sans',sans-serif;font-style:normal;transform:scaleX(1.05);transform-origin:0 0;">Bottom:</div>
<div class="t" style="left:221.2px;top:295.54px;font-size:12px;line-height:12px;color:#6B6B6B;font-weight:400;font-family:'Liberation Sans',sans-serif;font-style:normal;transform:scaleX(0.9);transform-origin:0 0;">1"</div>
<div class="t" style="left:75.8px;top:310.54px;font-size:12px;line-height:12px;color:#6B6B6B;font-weight:400;font-family:'Liberation Sans',sans-serif;font-style:normal;">Left:</div>
<div class="t" style="left:120.3px;top:310.54px;font-size:12px;line-height:12px;color:#6B6B6B;font-weight:400;font-family:'Liberation Sans',sans-serif;font-style:normal;transform:scaleX(0.9);transform-origin:0 0;">2"</div>
<div class="t" style="left:176px;top:310.54px;font-size:12px;line-height:12px;color:#6B6B6B;font-weight:400;font-family:'Liberation Sans',sans-serif;font-style:normal;transform:scaleX(1.0);transform-origin:0 0;">Right:</div>
<div class="t" style="left:221.2px;top:310.54px;font-size:12px;line-height:12px;color:#6B6B6B;font-weight:400;font-family:'Liberation Sans',sans-serif;font-style:normal;transform:scaleX(0.9);transform-origin:0 0;">2"</div>
<svg class="r" style="left:14px;top:360px;" width="45" height="29" viewBox="0 0 45 29"><rect x="0.5" y="0.5" width="44" height="28" fill="#fff" stroke="#717171"/><path d="M17.5 1V28M22.5 1V28" stroke="#717171"/><path d="M3.5 1V28M27.5 1V28M41.5 1V28M1 3.5H44M1 25.5H44" stroke="#4F78A8"/></svg>
<div class="t" style="left:75.8px;top:346.54px;font-size:12px;line-height:12px;color:#505050;font-weight:700;font-family:'Liberation Sans',sans-serif;font-style:normal;">Mirrored</div>
<div class="t" style="left:75.8px;top:361.54px;font-size:12px;line-height:12px;color:#6B6B6B;font-weight:400;font-family:'Liberation Sans',sans-serif;font-style:normal;">Top:</div>
<div class="t" style="left:120.3px;top:361.54px;font-size:12px;line-height:12px;color:#6B6B6B;font-weight:400;font-family:'Liberation Sans',sans-serif;font-style:normal;transform:scaleX(0.9);transform-origin:0 0;">1"</div>
<div class="t" style="left:176px;top:361.54px;font-size:12px;line-height:12px;color:#6B6B6B;font-weight:400;font-family:'Liberation Sans',sans-serif;font-style:normal;transform:scaleX(1.05);transform-origin:0 0;">Bottom:</div>
<div class="t" style="left:221.2px;top:361.54px;font-size:12px;line-height:12px;color:#6B6B6B;font-weight:400;font-family:'Liberation Sans',sans-serif;font-style:normal;transform:scaleX(0.9);transform-origin:0 0;">1"</div>
<div class="t" style="left:75.8px;top:376.54px;font-size:12px;line-height:12px;color:#6B6B6B;font-weight:400;font-family:'Liberation Sans',sans-serif;font-style:normal;">Inside:</div>
<div class="t" style="left:120.3px;top:376.54px;font-size:12px;line-height:12px;color:#6B6B6B;font-weight:400;font-family:'Liberation Sans',sans-serif;font-style:normal;transform:scaleX(0.9);transform-origin:0 0;">1.25"</div>
<div class="t" style="left:176px;top:376.54px;font-size:12px;line-height:12px;color:#6B6B6B;font-weight:400;font-family:'Liberation Sans',sans-serif;font-style:normal;transform:scaleX(1.0);transform-origin:0 0;">Outside:</div>
<div class="t" style="left:221.2px;top:376.54px;font-size:12px;line-height:12px;color:#6B6B6B;font-weight:400;font-family:'Liberation Sans',sans-serif;font-style:normal;transform:scaleX(0.9);transform-origin:0 0;">1"</div>
<svg class="r" style="left:20px;top:420px;" width="33" height="42" viewBox="0 0 33 42"><rect x="0.5" y="0.5" width="32" height="41" fill="#fff" stroke="#717171"/><path d="M8.5 1V41M25.5 1V41M1 7.5H32M1 34.5H32" stroke="#4F78A8"/></svg>
<div class="t" style="left:75.8px;top:412.54px;font-size:12px;line-height:12px;color:#505050;font-weight:700;font-family:'Liberation Sans',sans-serif;font-style:normal;">Office 2003 Default</div>
<div class="t" style="left:75.8px;top:427.54px;font-size:12px;line-height:12px;color:#6B6B6B;font-weight:400;font-family:'Liberation Sans',sans-serif;font-style:normal;">Top:</div>
<div class="t" style="left:120.3px;top:427.54px;font-size:12px;line-height:12px;color:#6B6B6B;font-weight:400;font-family:'Liberation Sans',sans-serif;font-style:normal;transform:scaleX(0.9);transform-origin:0 0;">1"</div>
<div class="t" style="left:176px;top:427.54px;font-size:12px;line-height:12px;color:#6B6B6B;font-weight:400;font-family:'Liberation Sans',sans-serif;font-style:normal;transform:scaleX(1.05);transform-origin:0 0;">Bottom:</div>
<div class="t" style="left:221.2px;top:427.54px;font-size:12px;line-height:12px;color:#6B6B6B;font-weight:400;font-family:'Liberation Sans',sans-serif;font-style:normal;transform:scaleX(0.9);transform-origin:0 0;">1"</div>
<div class="t" style="left:75.8px;top:442.54px;font-size:12px;line-height:12px;color:#6B6B6B;font-weight:400;font-family:'Liberation Sans',sans-serif;font-style:normal;">Left:</div>
<div class="t" style="left:120.3px;top:442.54px;font-size:12px;line-height:12px;color:#6B6B6B;font-weight:400;font-family:'Liberation Sans',sans-serif;font-style:normal;transform:scaleX(0.9);transform-origin:0 0;">1.25"</div>
<div class="t" style="left:176px;top:442.54px;font-size:12px;line-height:12px;color:#6B6B6B;font-weight:400;font-family:'Liberation Sans',sans-serif;font-style:normal;transform:scaleX(1.0);transform-origin:0 0;">Right:</div>
<div class="t" style="left:221.2px;top:442.54px;font-size:12px;line-height:12px;color:#6B6B6B;font-weight:400;font-family:'Liberation Sans',sans-serif;font-style:normal;transform:scaleX(0.9);transform-origin:0 0;">1.25"</div>
<div class="r" style="left:9px;top:476px;width:56px;height:55.5px;background:#C4C4C4;box-shadow:inset 0 0 0 1px #9A9A9A"></div>
<svg class="r" style="left:20px;top:484px;" width="33" height="41" viewBox="0 0 33 41"><rect x="0.5" y="0.5" width="32" height="40" fill="#fff" stroke="#717171"/><path d="M7.5 1V40M25.5 1V40M1 6.5H32M1 33.5H32" stroke="#4F78A8"/><path d="M16.5 13L18.5 18.3L24 18.5L19.7 21.9L21.2 27.3L16.5 24.2L11.8 27.3L13.3 21.9L9 18.5L14.5 18.3Z" fill="#E3BC6E"/></svg>
<div class="t" style="left:75.5px;top:497.64px;font-size:12px;line-height:12px;color:#505050;font-weight:700;font-family:'Liberation Sans',sans-serif;font-style:normal;transform:scaleX(0.94);transform-origin:0 0;">Custom Margins</div>
<div class="t" style="left:39.5px;top:541.84px;font-size:12px;line-height:12px;color:#6B6B6B;font-weight:400;font-family:'Liberation Sans',sans-serif;font-style:normal;">Custom M<u style="text-decoration-thickness:1px;text-underline-offset:2px">a</u>rgins...</div>
<div class="r" style="left:240px;top:27px;width:82px;height:44px;box-sizing:border-box;border:5px solid #D20000;border-radius:2px"></div>
<div class="r" style="left:-2px;top:62px;width:64px;height:75.4px;box-sizing:border-box;border:5px solid #D20000;border-radius:2px"></div>
<div class="r" style="left:-2px;top:132.8px;width:254px;height:279px;box-sizing:border-box;border:5px solid #D20000;border-radius:2px"></div>
<div style="position:absolute;left:55px;top:100px;width:8px;height:20px;overflow:hidden"><div class="t" style="left:0.2px;top:6.84px;font-size:12px;line-height:12px;color:#262626;font-family:'Liberation Sans',sans-serif;transform:scaleX(1.012);transform-origin:0 0">O</div></div>
</body></html>
